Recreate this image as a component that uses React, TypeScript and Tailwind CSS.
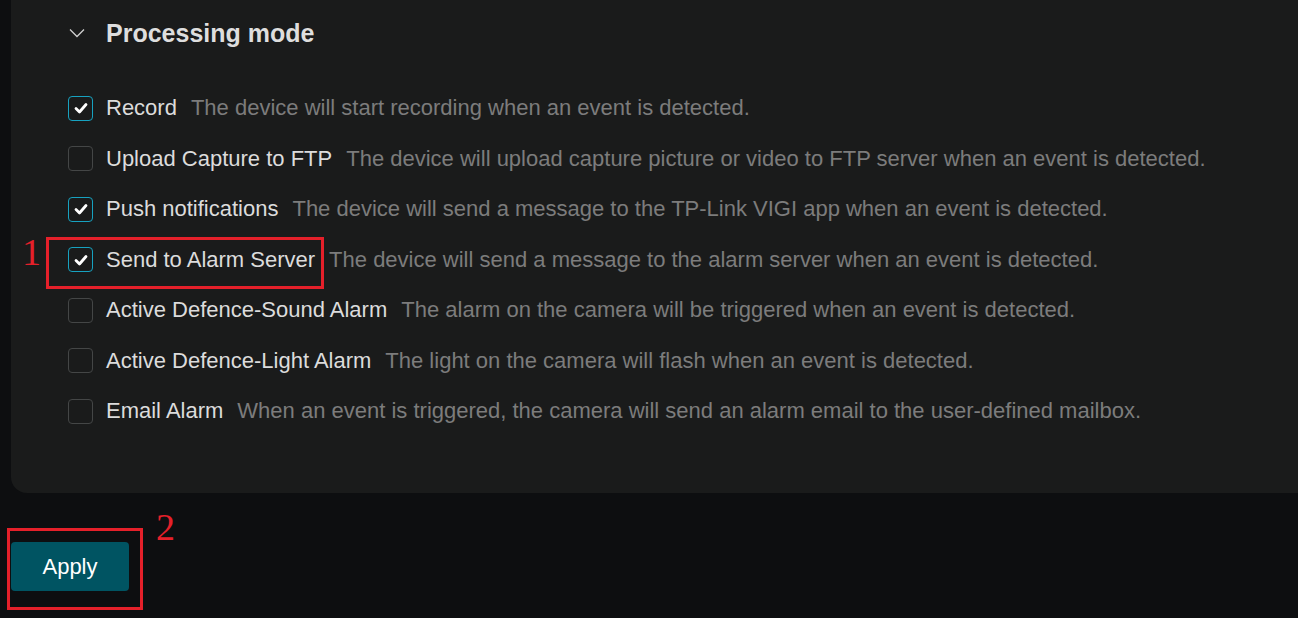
import React from "react";

const rows: { label: string; desc: string; checked: boolean }[] = [
  { label: "Record", desc: "The device will start recording when an event is detected.", checked: true },
  { label: "Upload Capture to FTP", desc: "The device will upload capture picture or video to FTP server when an event is detected.", checked: false },
  { label: "Push notifications", desc: "The device will send a message to the TP-Link VIGI app when an event is detected.", checked: true },
  { label: "Send to Alarm Server", desc: "The device will send a message to the alarm server when an event is detected.", checked: true },
  { label: "Active Defence-Sound Alarm", desc: "The alarm on the camera will be triggered when an event is detected.", checked: false },
  { label: "Active Defence-Light Alarm", desc: "The light on the camera will flash when an event is detected.", checked: false },
  { label: "Email Alarm", desc: "When an event is triggered, the camera will send an alarm email to the user-defined mailbox.", checked: false },
];

function Checkbox({ checked }: { checked: boolean }) {
  return checked ? (
    <div className="w-[25px] h-[25px] rounded-[4px] border border-[#17a2c0] bg-[#1a1b1b] flex items-center justify-center shrink-0">
      <svg width="16" height="16" viewBox="0 0 16 16" fill="none">
        <path d="M3 8.5 L6.5 12 L13 4.5" stroke="#ffffff" strokeWidth="2.8" strokeLinecap="round" strokeLinejoin="round" />
      </svg>
    </div>
  ) : (
    <div className="w-[25px] h-[25px] rounded-[4px] border border-[#444646] shrink-0" />
  );
}

export default function App() {
  return (
    <div className="relative w-[1298px] h-[618px] bg-[#0d0e10] overflow-hidden font-['Liberation_Sans',Arial,sans-serif]">
      <div className="ml-[11px] h-[493px] bg-[#1a1b1b] rounded-bl-[16px] pl-[57px] pt-[19px]">
        <div className="flex items-center h-[28px]">
          <svg width="16" height="10" viewBox="0 0 16 10" className="ml-[1px]" fill="none">
            <path d="M1 1.5 L8 8.5 L15 1.5" stroke="#cfcfcf" strokeWidth="1.3" />
          </svg>
          <span className="ml-[21px] text-[25px] font-bold text-[#dedede] leading-none">Processing mode</span>
        </div>
        <div className="mt-[36px] flex flex-col">
          {rows.map((r) => (
            <div key={r.label} className="flex items-center h-[50.5px]">
              <Checkbox checked={r.checked} />
              <span className="ml-[13px] text-[22px] text-[#dcdcdc] whitespace-nowrap leading-none">{r.label}</span>
              <span className="ml-[14px] text-[22px] text-[#7c7c7c] whitespace-nowrap leading-none">{r.desc}</span>
            </div>
          ))}
        </div>
      </div>
      <div className="ml-[11px] mt-[49px]">
        <button className="w-[118px] h-[49px] rounded-[4px] bg-[#005462] text-white text-[22px] leading-none">Apply</button>
      </div>

      <div className="absolute left-[46px] top-[237px] w-[278px] h-[52px] border-[3px] border-[#e5202a]" />
      <span className="absolute left-[22px] top-[233px] text-[38px] leading-none text-[#e5202a] font-['Liberation_Serif',serif]">1</span>
      <div className="absolute left-[7px] top-[528px] w-[136px] h-[82px] border-[3px] border-[#e5202a]" />
      <span className="absolute left-[156px] top-[508px] text-[38px] leading-none text-[#e5202a] font-['Liberation_Serif',serif]">2</span>
    </div>
  );
}
